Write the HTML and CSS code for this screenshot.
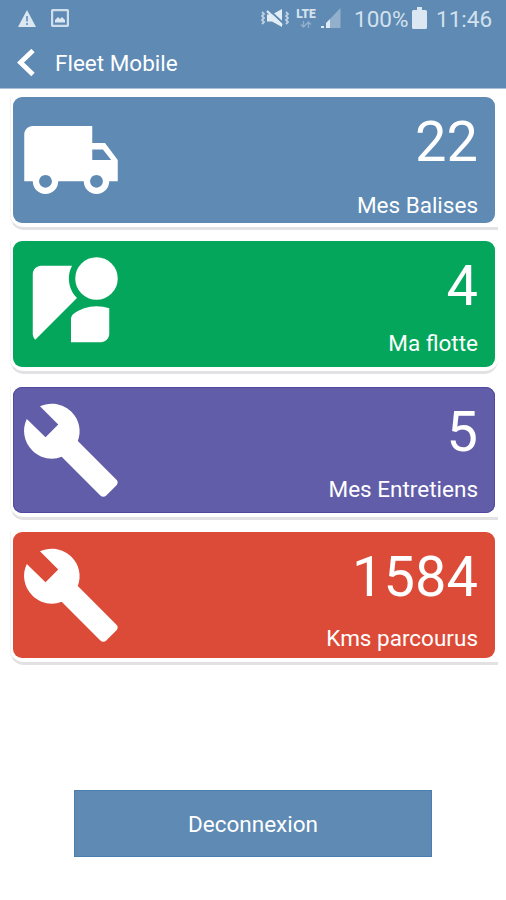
FILE: index.html
```html
<!DOCTYPE html>
<html lang="fr">
<head>
    <meta charset="UTF-8">
    <meta name="viewport" content="width=device-width, initial-scale=1.0">
    <title>Fleet Mobile</title>
    <link rel="stylesheet" href="styles.css">
</head>
<body>

<header class="header">
    <div class="status-bar">
        <svg class="icon-warning" width="18" height="17" viewBox="0 0 18 17"><path d="M9 0l9 17H0z" fill="#dce8f1"/><path d="M9 6v5.500M9 13v2" stroke="#7d9fbf" stroke-width="2"/></svg>
        <svg class="icon-image" width="18" height="18" viewBox="0 0 18 18"><rect x="1" y="1" width="16" height="16" rx="1.500" fill="none" stroke="#cfdeea" stroke-width="2.400"/><path d="M4 13.500V11l3-3 2 2 2-2 3 3v2.500z" fill="#dce8f1"/></svg>
        <svg class="icon-mute" width="28" height="18" viewBox="0 0 28 18"><path d="M6 5.500h5L21 0v18l-10-5.500H6z" fill="#e3edf5"/><path d="M8 1l14 13" stroke="#5e8ab4" stroke-width="2"/><path d="M6 2l15 14" stroke="#e3edf5" stroke-width="2.200"/><path d="M1 3l2 2-2 2 2 2-2 2 2 2-2 2M25 3l2 2-2 2 2 2-2 2 2 2-2 2" fill="none" stroke="#bfd2e3" stroke-width="1.800"/></svg>
        <div class="lte">
            <span>LTE</span>
            <svg width="12" height="7" viewBox="0 0 12 7"><path d="M3.500 0v6M1 3.500l2.500 2.500L6 3.500M8.500 7V1M6 3.500L8.500 1 11 3.500" fill="none" stroke="#91b0cd" stroke-width="1.300"/></svg>
        </div>
        <svg class="icon-signal" width="20" height="20" viewBox="0 0 20 20"><path d="M9 11l10.500-11v20H9z" fill="#92b0cc"/><path d="M5 15l4-4v9H5zM0 18h3v2H0z" fill="#e0ebf4"/></svg>
        <span class="battery-level">100%</span>
        <svg class="icon-battery" width="15" height="22" viewBox="0 0 15 22"><path d="M5 0h5v3h3.500q1.500 0 1.500 1.500v16q0 1.500-1.500 1.500h-12Q0 22 0 20.500v-16Q0 3 1.500 3H5z" fill="#dbe7f1"/></svg>
        <span class="clock">11:46</span>
    </div>
    <div class="title-bar">
        <svg width="18" height="28" viewBox="0 0 18 28"><path d="M16 1.500L3.500 13.500l12.500 12" fill="none" stroke="#fff" stroke-width="4.800"/></svg>
        <h1>Fleet Mobile</h1>
    </div>
</header>

<main class="content">
    <section class="tile tile-balises">
        <div class="card blue">
            <svg class="card-icon" viewBox="0 0 24 24"><path d="M20 8h-3V4H3c-1.100 0-2 .9-2 2v11h2c0 1.660 1.340 3 3 3s3-1.340 3-3h6c0 1.660 1.340 3 3 3s3-1.340 3-3h2v-5l-3-4zM6 18.500c-.83 0-1.500-.67-1.500-1.500s.67-1.500 1.500-1.500 1.500.67 1.500 1.500-.67 1.500-1.500 1.500zm13.500-9l1.960 2.500H17V9.500h2.500zm-1.500 9c-.83 0-1.500-.67-1.500-1.500s.67-1.500 1.500-1.500 1.500.67 1.500 1.500-.67 1.500-1.500 1.500z"/></svg>
            <div class="card-text">
                <span class="number">22</span>
                <span class="label">Mes Balises</span>
            </div>
        </div>
    </section>

    <section class="tile tile-flotte">
        <div class="card green">
            <svg class="card-icon" viewBox="0 0 24 24"><path d="M12.560 14.330c-.34.27-.56.7-.56 1.170V21h7c1.100 0 2-.9 2-2v-5.980c-.94-.33-1.950-.52-3-.52-2.030 0-3.930.7-5.440 1.830z"/><circle cx="18" cy="6" r="5"/><path d="M11.500 6c0-1.080.27-2.100.74-3H5c-1.100 0-2 .9-2 2v14c0 .55.23 1.050.59 1.410l9.820-9.820C12.230 9.420 11.500 7.800 11.500 6z"/></svg>
            <div class="card-text">
                <span class="number">4</span>
                <span class="label">Ma flotte</span>
            </div>
        </div>
    </section>

    <section class="tile tile-entretiens">
        <div class="card purple">
            <svg class="card-icon" viewBox="0 0 24 24"><path d="M22.700 19l-9.100-9.100c.9-2.300.4-5-1.500-6.900-2-2-5-2.400-7.400-1.300L9 6 6 9 1.600 4.700C.4 7.100.9 10.100 2.900 12.100c1.900 1.900 4.600 2.400 6.900 1.500l9.100 9.100c.4.4 1 .4 1.400 0l2.300-2.300c.5-.4.5-1.100.1-1.400z"/></svg>
            <div class="card-text">
                <span class="number">5</span>
                <span class="label">Mes Entretiens</span>
            </div>
        </div>
    </section>

    <section class="tile tile-kms">
        <div class="card red">
            <svg class="card-icon" viewBox="0 0 24 24"><path d="M22.700 19l-9.100-9.100c.9-2.300.4-5-1.500-6.900-2-2-5-2.400-7.400-1.300L9 6 6 9 1.600 4.700C.4 7.100.9 10.100 2.900 12.100c1.900 1.900 4.600 2.400 6.900 1.500l9.100 9.100c.4.4 1 .4 1.400 0l2.300-2.300c.5-.4.5-1.100.1-1.400z"/></svg>
            <div class="card-text">
                <span class="number">1584</span>
                <span class="label">Kms parcourus</span>
            </div>
        </div>
    </section>

    <button class="logout" type="button">Deconnexion</button>
</main>

</body>
</html>
```
FILE: styles.css
```css
* { box-sizing: border-box; }
body { margin: 0; background-color: #fff; font-family: Roboto, sans-serif; color: #fff; }
svg { display: block; flex: none; }

.header { height: 89px; background-color: #5e8ab4; border-bottom: 1px solid #a9c1d8; }
.status-bar { display: flex; align-items: flex-start; height: 37px; padding-left: 18px; color: #d3e1ed; }
.icon-warning { margin-top: 10px; }
.icon-image { margin: 9px 0 0 15px; }
.icon-mute { margin: 9px 0 0 192px; }
.lte { display: flex; flex-direction: column; align-items: center; width: 20px; margin: 9px 0 0 7px; font-size: 12px; font-weight: 900; line-height: 10px; }
.lte svg { margin-top: 2px; }
.icon-signal { margin: 8px 0 0 5px; }
.battery-level { width: 55px; margin: 5px 0 0 13px; font-size: 22.500px; line-height: 28px; }
.icon-battery { margin: 7px 0 0 3px; }
.clock { margin: 5px 0 0 9px; font-size: 22.500px; line-height: 28px; }
.title-bar { display: flex; align-items: center; height: 51px; padding-left: 17px; }
.title-bar h1 { margin: 1px 0 0 20px; font-size: 22.500px; font-weight: 400; line-height: 28px; }

.content { display: flex; flex-direction: column; padding: 8px 8px 0 10px; }
.tile { height: 133px; padding-left: 3px; padding-right: 3px; border-bottom: 3px solid #e2e2e4; border-left: 1px solid #f3f3f4; border-bottom-left-radius: 14px; }
.tile-balises { margin-bottom: 11px; }
.tile-flotte { margin-bottom: 13px; border-bottom-right-radius: 14px; }
.tile-entretiens { margin-bottom: 12px; }

.card { display: flex; justify-content: space-between; height: 126px; margin-left: -1px; border-radius: 9px; }
.card-icon { width: 102px; height: 102px; margin: 12px 0 0 7px; fill: #fff; }
.card-text { display: flex; flex-direction: column; align-items: flex-end; padding: 15px 17px 0 0; }
.number { font-size: 56px; line-height: 60px; }
.label { margin-top: 19px; font-size: 22.500px; line-height: 28px; }
.blue { background-color: #5e8ab4; }
.green { background-color: #03a65a; }
.purple { background-color: #615da8; box-shadow: inset 0 0 0 1px #5148a2; }
.red { background-color: #dc4b38; }
.green .label { margin-top: 13px; }
.purple .label { margin-top: 13px; }
.red .label { margin-top: 17px; }

.logout { width: 358px; height: 67px; margin: 125px 0 0 64px; padding: 0; border: 1px solid #4a7eae; background-color: #5e8ab4; color: #fff; font-family: Roboto, sans-serif; font-size: 22.500px; cursor: pointer; }
```
